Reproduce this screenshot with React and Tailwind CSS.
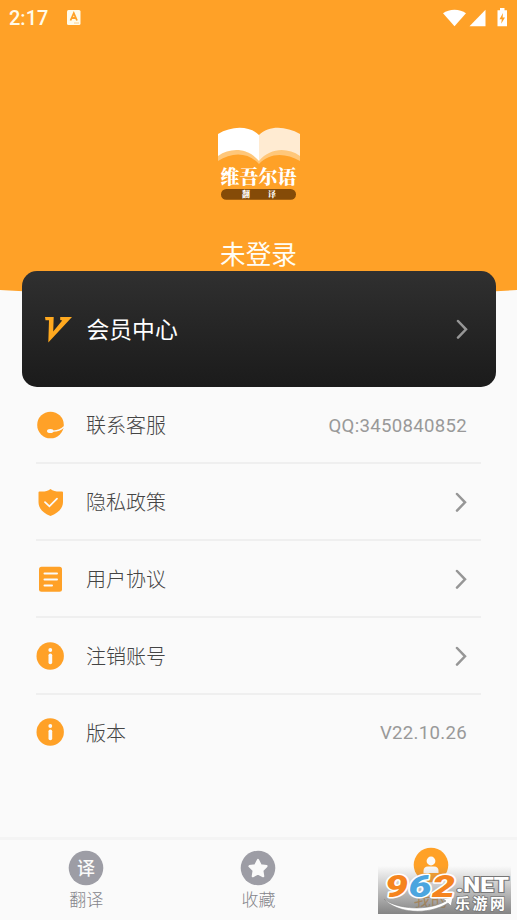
const rows = [
  { icon: 'service', label: '联系客服', value: 'QQ:3450840852' },
  { icon: 'shield', label: '隐私政策' },
  { icon: 'doc', label: '用户协议' },
  { icon: 'info', label: '注销账号' },
  { icon: 'info', label: '版本', value: 'V22.10.26' },
];

function RowIcon({ name }) {
  return (
    <svg viewBox="0 0 28 28" className="w-7 h-7 shrink-0" fill="#ffa127">
      {name === 'service' && (
        <>
          <circle cx="14.5" cy="14" r="13.3" />
          <path d="M14 19.8C20 20.6 25 19 28 15.8" fill="none" stroke="#fafafa" strokeWidth="1.3" />
          <ellipse cx="14.3" cy="20" rx="3.3" ry="2" fill="#fafafa" />
        </>
      )}
      {name === 'shield' && (
        <>
          <path d="M14.5 1C17.5 3.3 21.5 3.8 26 3.4Q27 3.4 27 4.5V14C27 20.5 22 25 14.5 28C7 25 2.5 20.5 2.5 14V4.5Q2.5 3.4 3.5 3.4C8 3.8 11.5 3.3 14.5 1Z" />
          <path d="M9 14.2L13.4 18.3L21 10.6" fill="none" stroke="#fafafa" strokeWidth="1.8" strokeLinecap="round" />
        </>
      )}
      {name === 'doc' && (
        <>
          <rect x="3" y="1.8" width="23" height="25" rx="2.5" />
          <path d="M8.5 8.4H21M8.5 14.4H21M8.5 20.4H16" fill="none" stroke="#fafafa" strokeWidth="2" strokeLinecap="round" />
        </>
      )}
      {name === 'info' && (
        <>
          <circle cx="14.2" cy="14" r="13.7" />
          <circle cx="14.3" cy="8" r="1.9" fill="#fafafa" />
          <rect x="12.5" y="11.5" width="3.7" height="10.7" rx="1.8" fill="#fafafa" />
        </>
      )}
    </svg>
  );
}

function Chevron() {
  return (
    <svg viewBox="0 0 12 20" className="w-3 h-5" fill="none" stroke="#969696" strokeWidth="2.5" strokeLinecap="round">
      <path d="M2 2L10 10.3L2 18.6" />
    </svg>
  );
}

function StatusBar() {
  return (
    <div className="h-9 flex items-center px-[9px]">
      <span className="font-[Roboto] font-medium text-[20px] text-[#fffbea] leading-none w-[58px]">2:17</span>
      <svg viewBox="0 0 14 15" className="w-3.5 h-[15px] -mt-0.5">
        <rect y="0" width="13.5" height="15" rx="1.5" fill="#fffbea" />
        <path d="M3.5 10.5L6.8 3.2L10 10.5M4.8 8H8.8" fill="none" stroke="#ffa127" strokeWidth="1.8" />
        <path d="M7 13H12" stroke="#ffd08a" />
      </svg>
      <svg viewBox="0 0 66 20" className="w-[66px] h-5 ml-auto -mt-px -mr-px" fill="#fff">
        <path d="M0 5.2C6 0.5 17 0.5 23 5.2L11.5 18.3Z" />
        <path d="M26.5 18.2L42.5 1.8V18.2Z" />
        <path d="M54.5 2.3H57V0H61.5V2.3H64V18.2H54.5Z" />
        <path d="M60 5L56.5 11.2H58.8L58.2 15.8L62 9.5H59.6Z" fill="#ffa127" />
      </svg>
    </div>
  );
}

function Logo() {
  return (
    <svg viewBox="0 0 84 74" className="w-[84px] h-[74px]">
      <path d="M1 27C14 19 29 21 42 32V37C31 25 15 25 1 34Z" fill="#ffc77a" />
      <path d="M42 32C52 20 69 19 83 27V34C69 26 53 25 42 37Z" fill="#ffc77a" />
      <path d="M1 7C14 -1 32 -2 42 8V34C31 21 14 20 1 29Z" fill="#fff" />
      <path d="M42 8C52 -2 69 -1 83 7V29C70 20 53 21 42 34Z" fill="#ffebd2" />
      <text x="3.5" y="57" textLength="76" className="font-['Noto_Serif_CJK_SC','Noto_Sans_CJK_SC',serif] font-black text-[19px]" fill="#fff">维吾尔语</text>
      <rect x="4" y="62" width="75" height="10.7" rx="5.3" fill="#854b08" />
      <g fill="#fff" className="font-['Noto_Serif_CJK_SC','Noto_Sans_CJK_SC',serif] font-black text-[8px]">
        <text x="25" y="70.4">翻</text>
        <text x="51" y="70.4">译</text>
      </g>
    </svg>
  );
}

function MemberCard() {
  return (
    <div className="relative mx-[21.5px] -mt-[25px] h-[116px] rounded-[15px] bg-linear-to-b from-[#303030] to-[#1b1b1b] flex items-center pl-[23px] pr-7">
      <svg viewBox="0 0 27 26" className="w-[27px] h-[26px] mt-0.5" fill="#ffa91f">
        <path d="M0 0H8.7L8.2 14.5L17.2 3.5L15.2 3V0H27L3.3 25.5L4 3.2H0.5Z" />
      </svg>
      <span className="ml-[15px] mt-1 text-[22.8px] text-white leading-none">会员中心</span>
      <span className="ml-auto"><Chevron /></span>
    </div>
  );
}

function Watermark() {
  return (
    <svg viewBox="0 0 133 48" className="absolute left-[378px] bottom-[6px] w-[133px] h-12">
      <defs>
        <linearGradient id="shade" x2="0" y2="1">
          <stop offset="0" stopColor="#777" stopOpacity="0" />
          <stop offset="1" stopColor="#777" stopOpacity="0.9" />
        </linearGradient>
      </defs>
      <rect width="133" height="48" fill="url(#shade)" />
      <path d="M6 33C20 44 51 45 68 35L65 33L75 31L73 40L70 37C50 50 18 47 6 33Z" fill="#fff" stroke="#888" strokeWidth="0.6" />
      <g className="font-[Roboto,sans-serif] font-black italic text-[32px]" stroke="#fff" strokeWidth="3" paintOrder="stroke" strokeLinejoin="round">
        <text x="7" y="31" textLength="23" lengthAdjust="spacingAndGlyphs" fill="#f5841f">9</text>
        <text x="30.5" y="31" textLength="23" lengthAdjust="spacingAndGlyphs" fill="#4ba5df">6</text>
        <text x="54" y="31" textLength="23" lengthAdjust="spacingAndGlyphs" fill="#f5841f">2</text>
      </g>
      <text
        x="78"
        y="26"
        textLength="53"
        lengthAdjust="spacingAndGlyphs"
        className="font-[Roboto,sans-serif] font-black text-[20px]"
        fill="#fff"
        stroke="#777"
        strokeWidth="2"
        paintOrder="stroke"
      >
        .NET
      </text>
      <text x="77" y="43" textLength="50" className="font-['Noto_Sans_CJK_SC',sans-serif] font-bold text-[15px]" fill="#fff" stroke="#777" strokeWidth="1.5" paintOrder="stroke">乐游网</text>
    </svg>
  );
}

function Tab({ label, active, children }) {
  return (
    <div className="flex-1 flex flex-col items-center pt-2.5">
      <svg viewBox="0 0 36 36" className={active ? 'w-9 h-9 -mt-[3px] mb-[3px]' : 'w-9 h-9'}>
        <circle cx="18" cy="18" r="17.3" fill={active ? '#ffa127' : '#9d9da5'} />
        {children}
      </svg>
      <span className={`mt-0.5 text-[17px] leading-[24px] ${active ? 'text-[#ffa127]' : 'font-light text-[#85858b]'}`}>{label}</span>
    </div>
  );
}

export default function App() {
  return (
    <div className="relative w-[517px] h-[920px] overflow-hidden flex flex-col bg-[#fafafa] font-[Roboto,'Noto_Sans_CJK_SC',sans-serif]">
      <header className="h-[296px] shrink-0 bg-[#ffa127] [clip-path:polygon(0_0,100%_0,100%_290px,50%_304px,0_290px)]">
        <StatusBar />
        <div className="flex flex-col items-center pt-[91px]">
          <Logo />
          <p className="mt-[41px] text-[25.6px] leading-[26px] text-[#fffdf5]">未登录</p>
        </div>
      </header>
      <MemberCard />

      <div className="pl-9 pr-9">
        {rows.map((row, i) => (
          <div
            key={row.label}
            className={`flex items-center pr-[14px] ${i < rows.length - 1 ? 'h-[77px] border-b-2 border-[#efefef]' : 'h-[74px]'}`}
          >
            <RowIcon name={row.icon} />
            <span className="ml-[22px] mt-[3px] text-[20px] leading-none font-light text-[#444]">{row.label}</span>
            {row.value ? (
              <span className="ml-auto mt-1 text-[18.6px] tracking-[0.3px] text-[#999]">{row.value}</span>
            ) : (
              <span className="ml-auto"><Chevron /></span>
            )}
          </div>
        ))}
      </div>

      <nav className="mt-auto h-[83px] shrink-0 border-t-[3px] border-[#f4f4f4] flex">
        <Tab label="翻译">
          <text x="18" y="24.7" textAnchor="middle" className="text-[18px] font-medium" fill="#fafafa">译</text>
        </Tab>
        <Tab label="收藏">
          <path
            d="M18 10L20.7 15.3L26.5 16.2L22.3 20.4L23.2 26.2L18 23.6L12.8 26.2L13.7 20.4L9.5 16.2L15.3 15.3Z"
            fill="#fafafa"
            stroke="#fafafa"
            strokeWidth="2.2"
            strokeLinejoin="round"
          />
        </Tab>
        <Tab label="我的" active>
          <circle cx="18" cy="14" r="4.4" fill="#fafafa" />
          <path d="M10.5 26V24Q10.5 19.5 15 19.5H21Q25.5 19.5 25.5 24V26Z" fill="#fafafa" />
        </Tab>
      </nav>
      <Watermark />
    </div>
  );
}
